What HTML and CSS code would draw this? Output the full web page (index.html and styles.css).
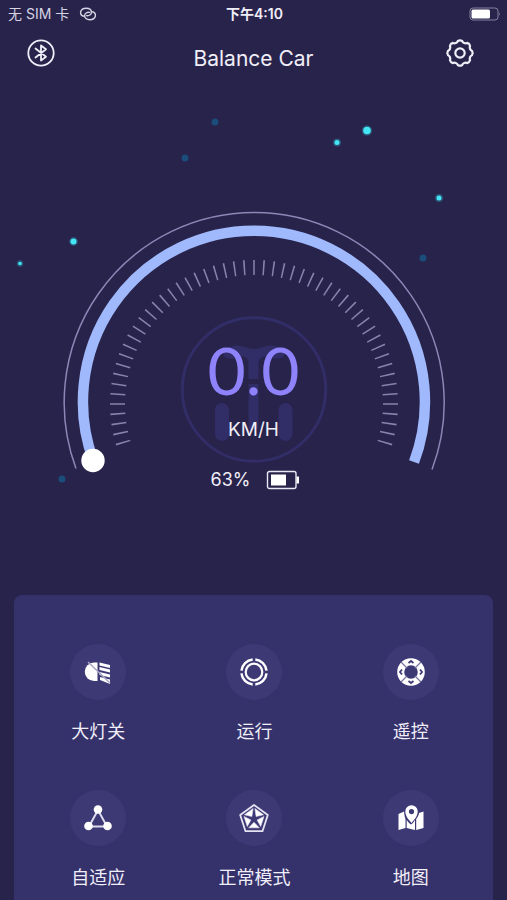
FILE: index.html
```html
<!DOCTYPE html>
<html lang="zh-CN">
<head>
<meta charset="utf-8">
<meta name="viewport" content="width=device-width, initial-scale=1">
<title>Balance Car</title>
<link rel="stylesheet" href="styles.css">
</head>
<body>
<div class="status">
  <div class="status-left">
    <span>无 SIM 卡</span>
    <svg class="icon" width="18" height="14" viewBox="0 0 18 14" fill="none" stroke="currentColor" stroke-width="1.4" stroke-linecap="round">
      <path d="M5 9.2A3.9 3.9 0 0 1 1.600 5C2.200 2.500 4.500 1.300 7.200 1.300C10.500 1.300 12.400 3 12.400 5.200C12.400 7.800 9.800 9 7.600 8.600"/>
      <path d="M13 4.800A3.900 3.900 0 0 1 16.400 9C15.800 11.500 13.500 12.700 10.800 12.700C7.500 12.700 5.600 11 5.600 8.800C5.600 6.200 8.200 5 10.400 5.400"/>
    </svg>
  </div>
  <time class="status-time">下午4:10</time>
  <svg class="icon status-battery" width="32" height="14" viewBox="0 0 32 14">
    <rect x="1" y="1" width="28" height="12" rx="3" fill="none" stroke="#8582a0"/>
    <rect x="2.500" y="2.500" width="18.500" height="9" rx="1.500" fill="#fff"/>
    <path d="M30 5q1.500 2 0 4z" fill="#8582a0"/>
  </svg>
</div>

<header class="topbar">
  <button class="icon-button" aria-label="Bluetooth">
    <svg class="icon" width="30" height="30" viewBox="-15 -15 30 30" fill="none" stroke="currentColor" stroke-width="1.800" stroke-linejoin="round" stroke-linecap="round">
      <circle r="12.700"/>
      <path d="M-5.500-4.500L5 3.800L0 7.500V-7.500L5-3.800L-5.500 4.500"/>
    </svg>
  </button>
  <h1 class="title">Balance Car</h1>
  <button class="icon-button settings" aria-label="Settings">
    <svg class="icon" width="30" height="30" viewBox="-15 -15 30 30" fill="none" stroke="currentColor" stroke-width="2.200" stroke-linejoin="round">
      <path d="M-2.200-12Q0-13.400 2.200-12C2.600-10.200 5.600-9.100 7.100-10.100Q9.500-9.500 10.100-7.100C9.100-5.600 10.200-2.600 12-2.200Q13.400 0 12 2.200C10.200 2.600 9.100 5.600 10.100 7.100Q9.500 9.500 7.100 10.100C5.600 9.100 2.600 10.200 2.200 12Q0 13.400-2.200 12C-2.600 10.200-5.600 9.100-7.100 10.100Q-9.500 9.500-10.100 7.100C-9.100 5.600-10.200 2.600-12 2.200Q-13.400 0-12-2.200C-10.200-2.600-9.100-5.600-10.100-7.100Q-9.500-9.500-7.100-10.100C-5.600-9.100-2.600-10.200-2.200-12Z"/>
      <circle r="4.700"/>
    </svg>
  </button>
</header>

<main class="main">
  <section class="stage">
    <svg class="gauge" viewBox="0 88 507 507" fill="none">
      <g fill="#1c4c7c">
        <circle cx="215" cy="122" r="3.500"/><circle cx="185" cy="158" r="3.500"/>
        <circle cx="423" cy="258" r="3.500"/><circle cx="62" cy="479" r="3.500"/>
      </g>
      <g fill="#3cdff0" fill-opacity=".25">
        <circle cx="367" cy="130.500" r="5.200"/><circle cx="337" cy="142.500" r="4"/>
        <circle cx="439" cy="198" r="4"/><circle cx="73.500" cy="241.500" r="4.400"/><circle cx="20" cy="263.500" r="3.200"/>
      </g>
      <g fill="#42e6f5">
        <circle cx="367" cy="130.500" r="3.800"/><circle cx="337" cy="142.500" r="2.500"/>
        <circle cx="439" cy="198" r="2.500"/><circle cx="73.500" cy="241.500" r="3"/><circle cx="20" cy="263.500" r="1.800"/>
      </g>
      <path d="M76 468.500A190 190 0 1 1 432 469.500" stroke="#8c87b6" stroke-width="1.500"/>
      <path d="M93.500 461A171 171 0 1 1 414 462" stroke="#a0b9fc" stroke-width="10.500"/>
      <path d="M124.500 447.100A136.500 136.500 0 1 1 383.500 447.100" pathLength="530" stroke="#8782ab" stroke-width="15" stroke-dasharray="0 4.200 1.600 4.200"/>
      <circle cx="93" cy="460.500" r="11.700" fill="#fff"/>
      <circle cx="254" cy="389.500" r="71.700" stroke="#312d67" stroke-width="3"/>
      <g fill="#312d67">
        <path d="M226 349Q235 343 245 347Q254 351 263 347Q273 343 282 349Q287 353 283 357Q278 360 269 357Q262 355 258.500 361V379H248.500V361Q246 355 239 357Q230 360 225 357Q221 353 226 349Z"/>
        <path d="M248.500 384H258.500V429H248.500Z"/>
        <rect x="215" y="403" width="14" height="38" rx="7"/>
        <rect x="278.500" y="403" width="14" height="38" rx="7"/>
      </g>
    </svg>
    <div class="readout">
      <div class="speed">0.0</div>
      <div class="unit">KM/H</div>
      <div class="charge">
        <span>63%</span>
        <svg class="icon" width="34" height="20" viewBox="0 0 34 20">
          <rect x="1.500" y="1.500" width="28.500" height="17" rx="2" fill="none" stroke="#e9e7f5" stroke-width="1.400"/>
          <rect x="5" y="4.500" width="15" height="11" fill="#fff"/>
          <path d="M30.500 6.500h2.500v7h-2.500z" fill="#fff"/>
        </svg>
      </div>
    </div>
  </section>

  <nav class="panel">
    <button class="action">
      <span class="badge"><svg class="icon" width="32" height="32" viewBox="-16 -16 32 32" fill="#fff">
        <path d="M-.500-9.500V9H-4A9.200 9.200 0 0 1-4-9.500Z"/>
        <path d="M1.500-9.500L12-7V-4L1.500-6.500ZM1.500-5L12-2.500V.500L1.500-2ZM1.500 0L12 2.500V5.500L1.500 3ZM2 5L12 7.500V12L2 8Z"/>
        <path d="M-10-10L12 11" stroke="#aaa7c8" stroke-width="1.600"/>
      </svg></span>
      <span class="label">大灯关</span>
    </button>
    <button class="action">
      <span class="badge"><svg class="icon" width="32" height="32" viewBox="-16 -16 32 32" fill="none" stroke="#fff">
        <circle r="8.300" stroke-width="2.200"/>
        <circle r="12.600" stroke-width="2.500" pathLength="80" stroke-dasharray="0 1.400 17.200 1.400"/>
      </svg></span>
      <span class="label">运行</span>
    </button>
    <button class="action">
      <span class="badge"><svg class="icon" width="32" height="32" viewBox="-16 -16 32 32" fill="none">
        <circle r="10.300" stroke="#fff" stroke-width="7"/>
        <path d="M-10-10L-4-4M10-10L4-4M-10 10L-4 4M10 10L4 4" stroke="#77739f" stroke-width="1.200"/>
        <path d="M-2.500-9L0-11L2.500-9M-2.500 9L0 11L2.500 9M-9-2.500L-11 0L-9 2.500M9-2.500L11 0L9 2.500" stroke="#3d3975" stroke-width="1.800"/>
      </svg></span>
      <span class="label">遥控</span>
    </button>
    <button class="action">
      <span class="badge"><svg class="icon" width="32" height="32" viewBox="-16 -16 32 32" fill="#fff">
        <path d="M0-8L-9 8.500H9Z" fill="none" stroke="#dddbec" stroke-width="2"/>
        <circle cy="-8.500" r="4.300"/><circle cx="-9.500" cy="8" r="4.300"/><circle cx="9.500" cy="8" r="4.300"/>
      </svg></span>
      <span class="label">自适应</span>
    </button>
    <button class="action">
      <span class="badge"><svg class="icon" width="32" height="32" viewBox="-16 -16 32 32" fill="none" stroke="#e4e2f0" stroke-linejoin="round">
        <path d="M0-13L13.800-3L8.500 13.200H-8.500L-13.800-3Z" stroke-width="1.800"/>
        <path d="M.900-9.500L9.500-3.200L2.100-1.500ZM-.900-9.500L-9.500-3.200L-2.100-1.500ZM10-1.500L6.700 8.500L3.100 2ZM-10-1.500L-6.700 8.500L-3.100 2ZM5.300 9.800H-5.300L0 4.300Z" fill="#fff" stroke-width=".600"/>
      </svg></span>
      <span class="label">正常模式</span>
    </button>
    <button class="action">
      <span class="badge"><svg class="icon" width="32" height="32" viewBox="-16 -16 32 32" fill="#fff">
        <path d="M-12.500-4L-7-6.500Q-6.500-1-5.500 1V10L-12.500 12ZM-4.300 2Q-2 5.500 0 6.500Q2 5.500 4 2V12L-4.300 10ZM5.200 1Q8-3 8-5L12.500-6.500V10L5.200 12Z"/>
        <path d="M.500 5C-2 2-5.700-1.800-5.700-6.500A6.200 6.200 0 0 1 6.700-6.500C6.700-1.800 3 2 .500 5ZM.500-9A2.600 2.600 0 1 0 .500-3.800A2.600 2.600 0 1 0 .500-9Z" fill-rule="evenodd"/>
      </svg></span>
      <span class="label">地图</span>
    </button>
  </nav>
</main>
</body>
</html>
```
FILE: styles.css
```css
* {
  box-sizing: border-box;
}

body {
  margin: 0;
  min-height: 100vh;
  display: flex;
  flex-direction: column;
  background: #28234b;
  color: #f0eef8;
  font-family: Inter, "Noto Sans CJK SC", sans-serif;
}

button {
  padding: 0;
  border: 0;
  background: none;
  color: inherit;
  font: inherit;
  cursor: pointer;
}

.icon {
  display: block;
  flex: none;
}

.status {
  display: grid;
  grid-template-columns: 1fr auto 1fr;
  align-items: center;
  height: 28px;
  padding: 0 6px 0 8px;
  font-size: 14px;
  line-height: 20px;
}

.status-left {
  display: flex;
  align-items: center;
  gap: 10px;
  color: #d6d3e4;
}

.status-time {
  font-weight: 600;
}

.status-battery {
  justify-self: end;
}

.topbar {
  display: grid;
  grid-template-columns: 1fr auto 1fr;
  height: 60px;
  padding: 10px 26px 0;
}

.icon-button {
  width: 30px;
  height: 30px;
}

.settings {
  justify-self: end;
  margin-right: 6px;
}

.title {
  margin: 6px 0 0;
  font-size: 21px;
  font-weight: 400;
  line-height: 30px;
}

.main {
  flex: 1;
  display: flex;
  flex-direction: column;
}

.stage {
  display: grid;
  justify-items: center;
}

.gauge,
.readout {
  grid-area: 1 / 1;
}

.gauge {
  display: block;
  width: 100%;
  max-width: 507px;
}

.readout {
  display: flex;
  flex-direction: column;
  align-items: center;
  padding-top: 246px;
}

.speed {
  color: #8f83fb;
  font-family: Lato, sans-serif;
  font-size: 66px;
  font-weight: 400;
  line-height: 72px;
}

.unit {
  margin-top: 10px;
  font-size: 19px;
  line-height: 28px;
}

.charge {
  display: flex;
  align-items: center;
  gap: 16px;
  margin-top: 22px;
  padding-left: 4px;
  font-size: 18px;
  line-height: 28px;
}

.panel {
  flex: 1;
  display: grid;
  grid-template-columns: repeat(3, 1fr);
  align-content: start;
  row-gap: 46px;
  margin: 0 14px;
  padding: 49px 4px 10px 6px;
  border-radius: 8px 8px 0 0;
  background: #35316b;
}

.action {
  display: flex;
  flex-direction: column;
  align-items: center;
  gap: 18px;
}

.badge {
  display: grid;
  place-items: center;
  width: 56px;
  height: 56px;
  border-radius: 50%;
  background: #3d3975;
}

.label {
  font-size: 18px;
  line-height: 28px;
  margin-bottom: -2px;
}
```
